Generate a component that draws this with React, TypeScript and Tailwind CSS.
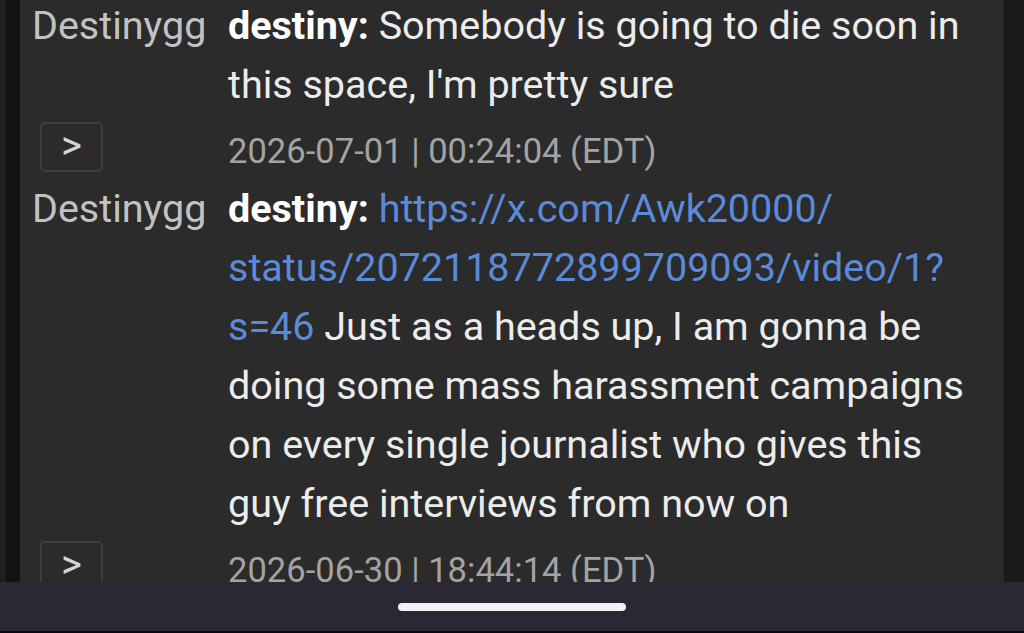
import React from "react";

function ExpandButton() {
  return (
    <div className="mb-[6px] ml-[8px] flex h-[50px] w-[63px] items-center justify-center rounded-[5px] border-2 border-[#3d3d3d] pb-[2px] text-[40px] leading-none text-[#d4d4d4]">
      &gt;
    </div>
  );
}

export default function App() {
  return (
    <div
      className="flex h-[633px] w-[1024px] flex-col overflow-hidden bg-[#2b2b2b]"
      style={{ fontFamily: "Roboto, 'Noto Sans', sans-serif" }}
    >
      <div className="flex h-[582px] overflow-hidden">
        <div className="w-[6px] shrink-0 bg-[#1f1f1f]" />
        <div className="w-[14px] shrink-0 bg-[#121212]" />
        <div className="flex-1 overflow-hidden pl-[12px] text-[39.5px] leading-[59px]">
          <div className="-mt-[4px]">
            {/* message 1 */}
            <div className="flex">
              <div className="w-[196px] shrink-0 text-[#c2c2c2]">Destinygg</div>
              <div className="w-[752px] text-[#ececec]">
                <span className="font-bold text-white">destiny:</span> Somebody is going to die soon in this space, I'm pretty sure
              </div>
            </div>
            <div className="mt-[6px] flex h-[59px] items-center">
              <div className="w-[196px] shrink-0">
                <ExpandButton />
              </div>
              <div className="pt-[4px] text-[34.6px] text-[#a3a3a3]">2026-07-01 | 00:24:04 (EDT)</div>
            </div>
            {/* message 2 */}
            <div className="flex">
              <div className="w-[196px] shrink-0 text-[#c2c2c2]">Destinygg</div>
              <div className="w-[752px] text-[#ececec]">
                <span className="font-bold text-white">destiny:</span>{" "}
                <span className="text-[#5b8ad8]">
                  https://x.com/Awk20000/<wbr />status/2072118772899709093/video/1?<wbr />s=46
                </span>{" "}
                Just as a heads up, I am gonna be doing some mass harassment campaigns on every single journalist who gives this guy free interviews from now on
              </div>
            </div>
            <div className="mt-[6px] flex h-[59px] items-center">
              <div className="w-[196px] shrink-0">
                <ExpandButton />
              </div>
              <div className="pt-[4px] text-[34.6px] text-[#a3a3a3]">2026-06-30 | 18:44:14 (EDT)</div>
            </div>
          </div>
        </div>
        <div className="w-[20px] shrink-0 border-l border-[#151515] bg-[#1b1b1b]" />
      </div>
      <div className="flex h-[49px] items-center justify-center bg-[#2a2833]">
        <div className="h-[8px] w-[228px] rounded-full bg-[#f2f2f2]" />
      </div>
      <div className="h-[2px] bg-[#0a0a0a]" />
    </div>
  );
}
